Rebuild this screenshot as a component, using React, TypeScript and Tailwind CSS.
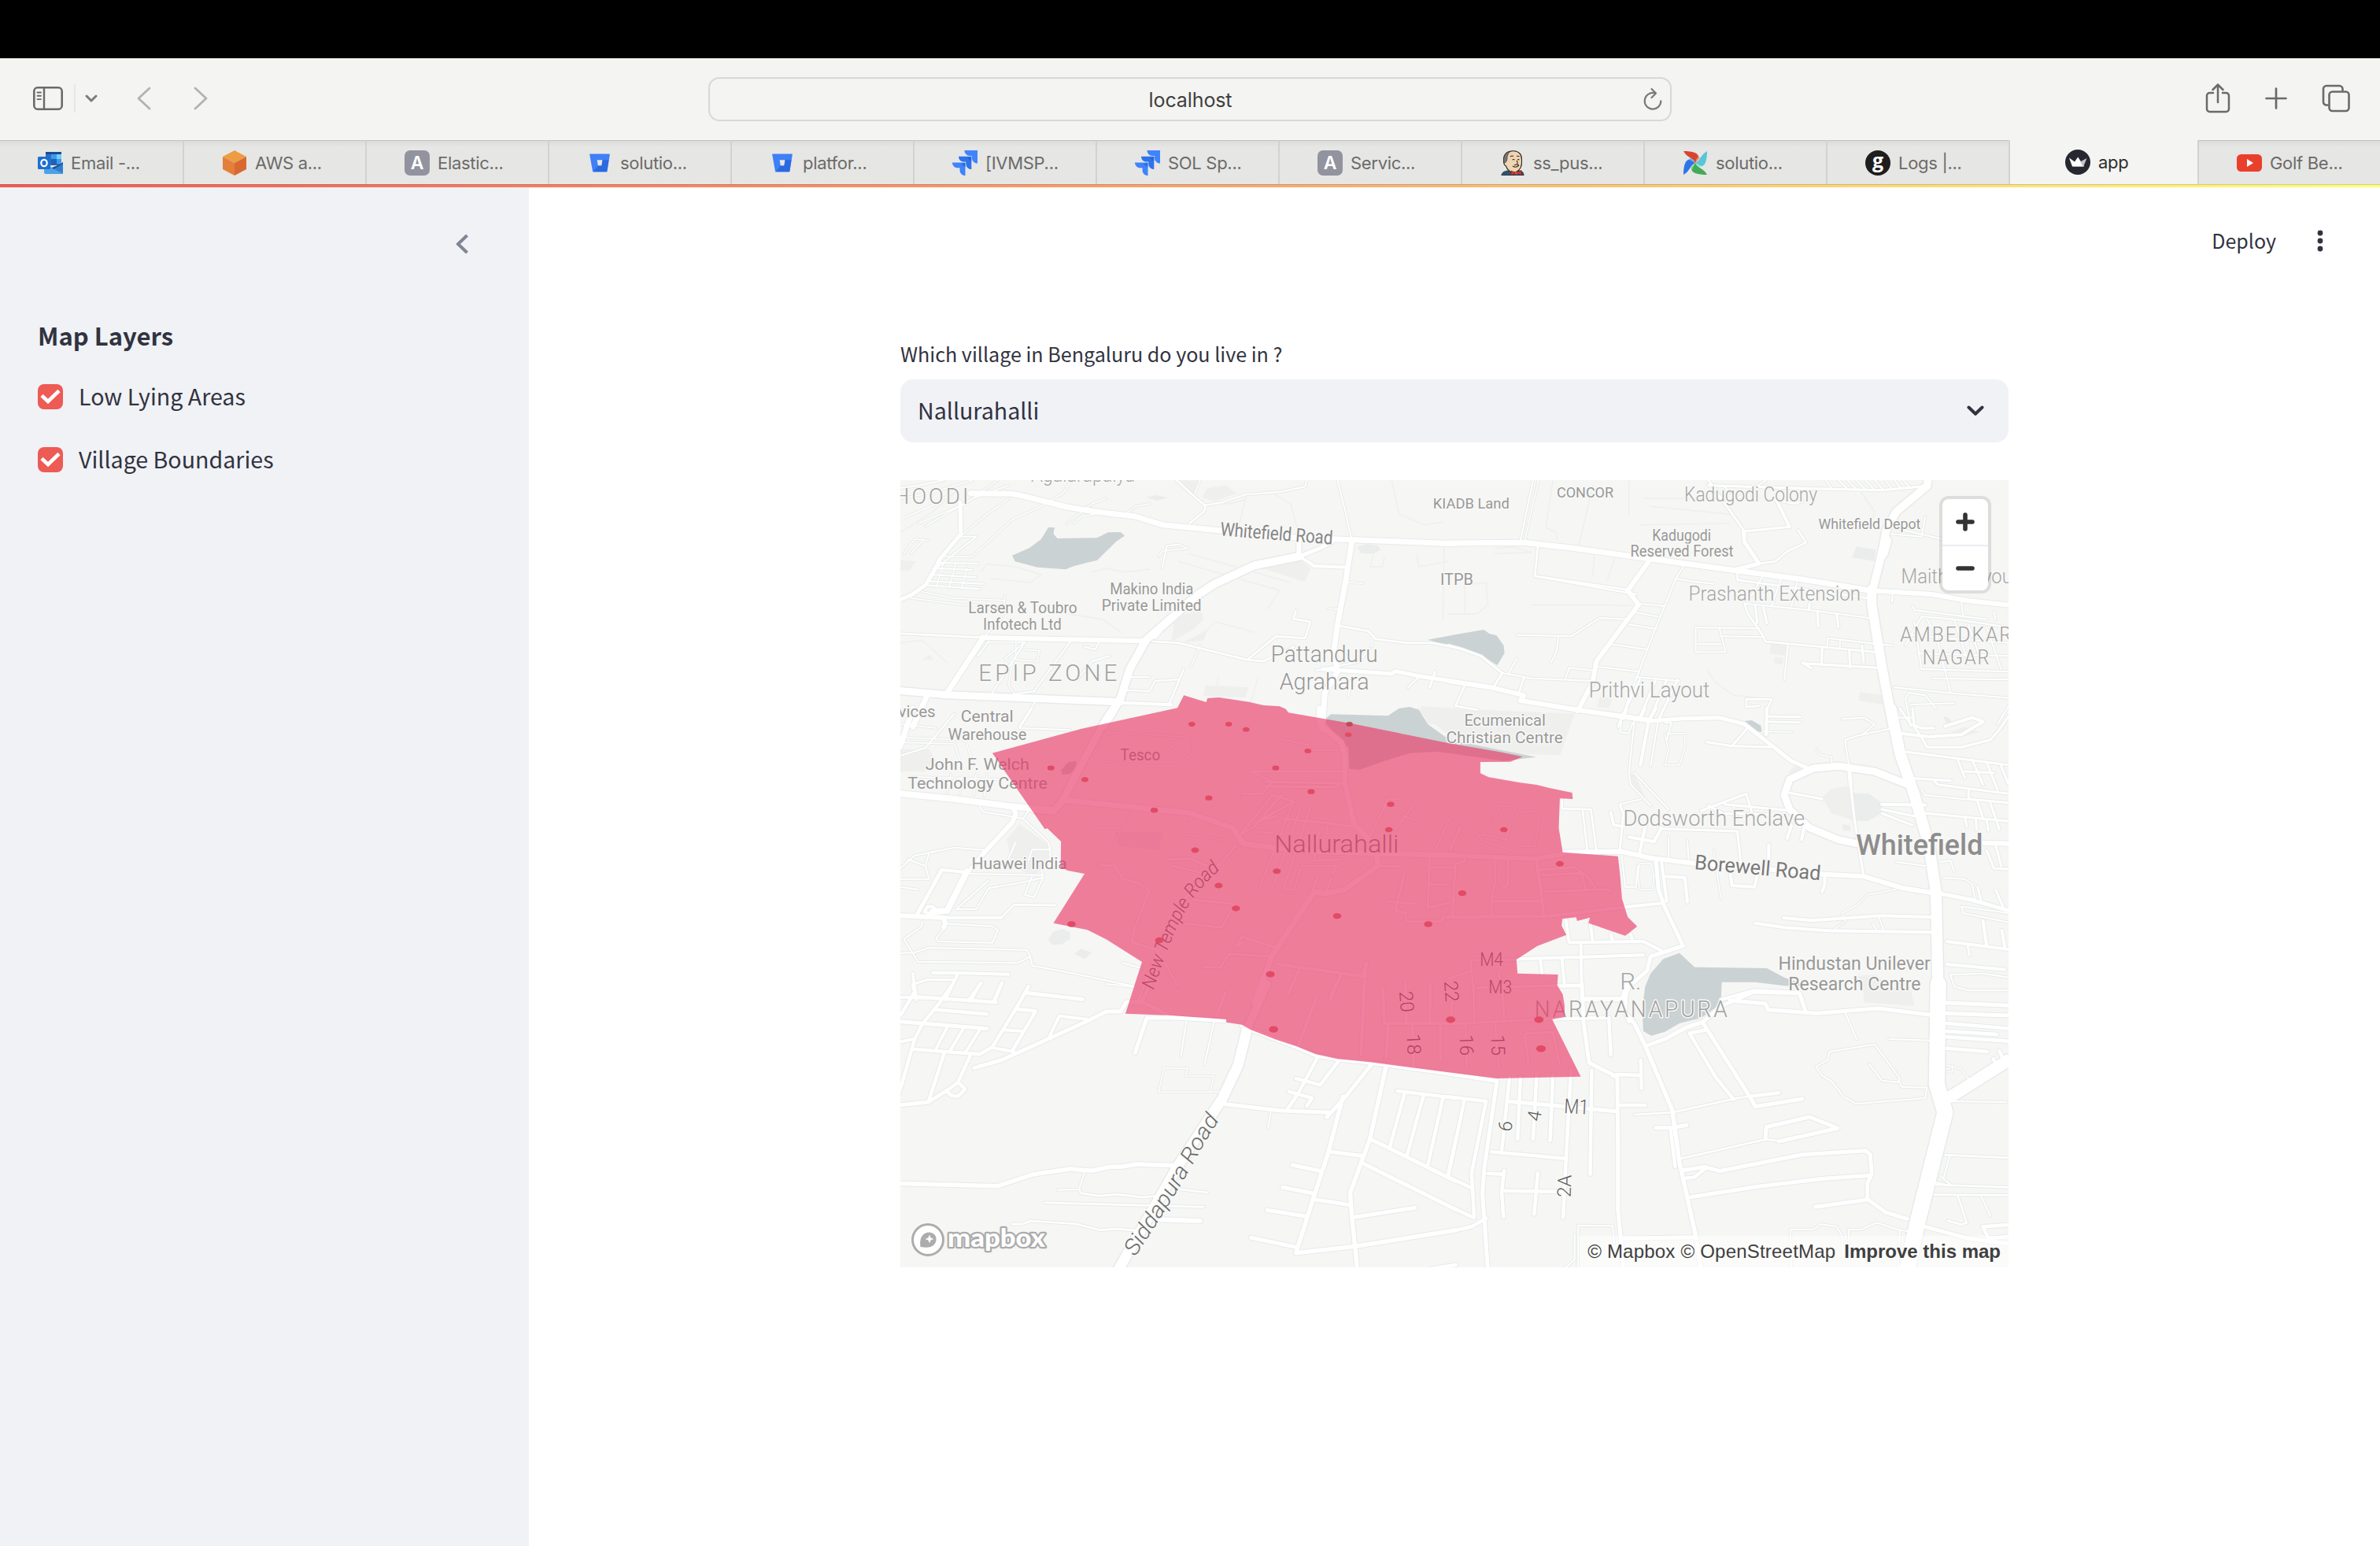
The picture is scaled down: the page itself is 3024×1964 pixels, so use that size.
import React from "react";

/* ------------------------------------------------------------------ */
/* ------------------------------------------------------------------ */

type SheetKey = "A" | "B" | "C" | "D" | "E" | "F";
const SX = 0.4592;
const SY = 1 / 3;
const ORIGIN: Record<SheetKey, [number, number]> = {
  A: [-14, -190],
  B: [696, -190],
  C: [-14, 290],
  D: [696, 290],
  E: [-14, 640],
  F: [696, 640],
};

const px = (s: SheetKey, x: number) => ORIGIN[s][0] + x * SX;
const py = (s: SheetKey, y: number) => ORIGIN[s][1] + y * SY;

function project(s: SheetKey, line: string) {
  return line
    .split(" ")
    .map((p) => {
      const [x, y] = p.split(",").map(Number);
      return `${px(s, x).toFixed(1)},${py(s, y).toFixed(1)}`;
    })
    .join(" ");
}

type Road = [number, string];

const ROADS: Record<SheetKey, Road[]> = {
  A: [
    [1.5, "30,640 110,620 230,570"],
    [1.5, "80,735 210,660 300,570"],
    [1.5, "100,745 230,640 330,590"],
    [1.5, "30,720 130,660 180,610"],
    [2, "30,600 80,590 150,570"],
    [1.5, "200,780 270,700 330,640"],
    [2, "200,785 240,785 130,905"],
    [1.5, "230,860 340,720 420,670 480,620 500,580"],
    [1.5, "150,860 230,860"],
    [1.5, "40,850 70,795 110,800"],
    [1.5, "60,850 95,795"],
    [2, "130,885 245,887"],
    [2, "120,905 230,912"],
    [2, "115,930 240,940"],
    [2, "105,955 260,965"],
    [2, "100,970 250,985"],
    [1.5, "150,885 130,975"],
    [1.5, "185,885 165,980"],
    [1.5, "215,905 200,985"],
    [1.5, "60,1020 200,1045 320,1050"],
    [1.5, "90,995 180,1020 320,1028"],
    [1.5, "320,1010 315,1080 265,1165"],
    [1.5, "490,735 560,660 600,640"],
    [1.5, "510,735 530,710 600,690"],
    [1.5, "650,705 680,670 720,660"],
    [2, "755,905 768,820 800,815"],
    [1.5, "745,860 755,840 825,830"],
    [1.5, "800,815 825,830"],
    [7, "225,620 340,622 375,632 490,672 570,690 680,708 755,740 900,760 1130,790 1240,795 1568,812"],
    [5, "196,655 198,775 140,870 128,905 100,970 60,1008 30,1025 10,1040"],
    [10, "1135,860 1010,895 900,965 850,1010 785,1090 710,1180 665,1290 640,1400 610,1470 590,1510"],
    [3, "785,1090 735,1172"],
    [6, "1133,790 1133,860"],
    [4, "1135,860 1175,897 1268,902"],
    [5, "1135,860 1190,830 1225,805"],
    [7, "1280,800 1262,960 1240,1120 1230,1220 1240,1300 1205,1380 1198,1520"],
    [2, "1240,570 1260,680 1280,800"],
    [2.5, "795,570 850,640 875,668 870,690 830,735"],
    [1.5, "860,570 845,625"],
    [2, "875,665 920,655 985,625 1080,615 1150,595 1155,570"],
    [1.2, "885,660 940,660 985,645"],
    [2.5, "10,1153 260,1170"],
    [6, "255,1170 710,1183"],
    [7, "260,1170 160,1380"],
    [9, "10,1370 160,1388 400,1402 640,1415"],
    [4, "640,1418 780,1426"],
    [7, "105,1390 65,1510"],
    [2.5, "730,1185 800,1190 990,1255 1035,1260 1120,1205"],
    [2.5, "990,1255 1070,1165 1150,1172 1165,1110 1118,1098 1125,1068"],
    [2.5, "1245,1125 1325,1145 1345,1175 1430,1190 1500,1190 1568,1208"],
    [1.5, "1335,1205 1340,1160"],
    [1.5, "1270,960 1310,963"],
    [1.5, "1215,1060 1240,1062"],
    [5, "1200,1290 1390,1308 1400,1298 1470,1318 1568,1338"],
    [2, "1180,1295 1300,1262 1330,1210"],
    [2, "1270,1395 1278,1330"],
    [3, "1495,1360 1510,1300"],
    [2, "1435,1360 1465,1320"],
    [2, "275,1185 245,1240"],
    [1.5, "270,1187 375,1187 320,1250 340,1265 330,1350 345,1385"],
    [1.5, "350,1190 350,1255 410,1260 415,1220 370,1215"],
    [2, "375,1187 285,1380"],
    [2, "500,1187 400,1375 345,1385"],
    [2, "580,1188 570,1215 540,1205"],
    [2, "665,1320 720,1320"],
    [2, "655,1370 720,1375 735,1335 800,1330"],
    [2.5, "815,1290 775,1420"],
    [1.5, "860,1200 835,1280"],
    [2, "520,1330 560,1260 610,1240"],
    [2, "410,1400 360,1510"],
    [1.2, "800,880 1080,990 1045,1060"],
    [1.2, "830,850 1110,960"],
    [1.2, "1010,1150 960,1130 900,1110 860,1170"],
    [1.2, "1050,610 1110,660 1130,760"],
    [1.2, "990,620 960,780"],
    [1.2, "1390,570 1410,700 1480,740 1530,730"],
    [1.2, "1340,850 1330,900 1365,900 1370,860"],
    [1.2, "1535,820 1532,1100"],
    [1.2, "1460,855 1465,900 1545,880"],
    [1.2, "30,770 120,690 190,610"],
    [1.2, "255,920 270,890 350,900 420,930 390,960 280,945"],
    [1.2, "560,920 600,905 650,920 720,910"],
    [1.2, "910,1320 900,1420"],
    [1.2, "1000,1420 1020,1320"],
    [1.2, "30,1190 90,1180 160,1265"],
    [1.2, "450,1070 590,1100 640,1150"],
  ],
  B: [
    [7, "0,810 210,808 340,828 560,870 800,915 990,950 1165,990"],
    [6, "1165,990 1340,1005 1440,1030 1568,1048"],
    [10, "1328,565 1325,592 1240,690 1212,760 1200,850 1175,985 1172,1040"],
    [13, "1212,800 1202,850"],
    [12, "1172,985 1172,1045 1200,1280 1232,1510"],
    [6, "560,870 497,990 527,1045 410,1260 400,1340 358,1450"],
    [2.5, "248,825 240,935 495,987"],
    [2.5, "240,935 520,1005"],
    [2, "630,945 575,1130 500,1400 485,1460"],
    [2, "650,900 630,945 670,955 735,965"],
    [2, "520,1075 580,1090"],
    [2, "500,1120 575,1137"],
    [2, "450,1195 550,1215"],
    [2, "527,1040 600,1050"],
    [3, "720,570 820,765 945,748 905,640"],
    [5, "818,765 820,805 860,888 790,912"],
    [4, "945,748 915,665"],
    [2.5, "860,888 905,880 940,840 990,808 968,760"],
    [2.5, "905,645 960,660 980,650"],
    [3, "720,590 960,600 1200,608 1325,592"],
    [2, "1045,570 1060,600"],
    [2, "1080,570 1105,603"],
    [2, "1105,570 1130,605"],
    [2, "1130,570 1155,607"],
    [2, "1155,570 1180,608"],
    [2, "1180,570 1205,608"],
    [2, "1210,570 1230,606"],
    [2, "1235,570 1255,604"],
    [2, "1260,570 1280,602"],
    [2, "760,590 800,640 880,570"],
    [2, "235,570 200,800"],
    [1.5, "250,570 212,800"],
    [1.2, "290,570 270,750 300,770 300,800"],
    [1.2, "400,590 360,830"],
    [1.2, "500,570 500,700"],
    [1.2, "560,670 780,700"],
    [1.2, "530,740 780,735"],
    [1.2, "540,640 720,640"],
    [1.2, "405,850 400,930"],
    [1.2, "460,870 440,950"],
    [1.2, "1130,590 1180,690 1170,730"],
    [2, "1320,710 1310,785 1225,775"],
    [2, "1228,750 1370,795"],
    [2.5, "800,925 800,950 1165,1020"],
    [2, "870,935 840,1010"],
    [2, "920,950 895,1050"],
    [2, "965,960 950,1050"],
    [2, "1230,1000 1228,1035"],
    [2.5, "820,1040 830,1080 870,1160 878,1185 1180,1225"],
    [2, "820,1040 1000,1065 1165,1095"],
    [3, "850,1050 855,1115"],
    [3, "872,1055 882,1115"],
    [3, "1022,1070 1024,1128"],
    [3, "1075,1078 1080,1130"],
    [3, "1000,1040 998,1065"],
    [2, "685,1132 860,1135"],
    [2, "685,1132 685,1225 768,1225 750,1132"],
    [2, "690,1195 755,1195"],
    [2, "755,1165 870,1168"],
    [2, "1048,1210 1050,1172 1180,1193"],
    [3, "1035,1205 1033,1275"],
    [3, "1110,1215 1112,1285"],
    [2, "1085,1180 1083,1215"],
    [3, "1145,1200 1150,1265"],
    [2, "1180,1193 1230,1200"],
    [3, "980,1265 1005,1287 985,1268 1185,1285"],
    [2, "940,1200 930,1330"],
    [3, "0,1200 40,1215 90,1240 150,1305 125,1360"],
    [2, "150,1305 230,1325 400,1335"],
    [2, "410,1280 530,1300"],
    [2, "190,1250 165,1310"],
    [2, "325,1325 335,1285 400,1295"],
    [6, "0,1335 120,1360 210,1390 200,1410 358,1445 560,1485"],
    [2.5, "210,1320 195,1385"],
    [2.5, "45,1355 20,1430 80,1445"],
    [3, "358,1445 400,1345"],
    [2, "190,1160 340,1165 420,1095 500,1100"],
    [2, "305,1170 300,1220 285,1265"],
    [1.2, "230,1045 510,1047"],
    [3, "530,1330 485,1460 470,1510"],
    [3, "575,1330 530,1475"],
    [3, "635,1330 585,1475"],
    [3, "605,1330 560,1475"],
    [2, "520,1320 640,1335"],
    [1.2, "715,1290 740,1340 790,1390 895,1405"],
    [2.5, "895,1405 825,1405 825,1435 860,1430"],
    [2.5, "895,1405 880,1450 882,1510"],
    [2.5, "885,1470 975,1472"],
    [2, "1235,1360 1420,1385 1551,1400"],
    [2, "1285,1050 1290,1065 1490,1100"],
    [2, "1420,1035 1425,1090"],
    [2, "1265,1200 1310,1090 1400,1100 1551,1130"],
    [2, "1290,1110 1310,1290"],
    [2, "1325,1100 1350,1160 1390,1380"],
    [2, "1400,1100 1440,1270"],
    [2, "1280,1160 1551,1190"],
    [2, "1300,1230 1551,1240"],
    [2, "1310,1290 1551,1300"],
    [2, "1340,1325 1551,1330"],
    [2, "1440,1120 1475,1260"],
    [2, "1490,1130 1530,1290"],
    [2, "1510,1070 1515,1100"],
    [2, "1275,1380 1265,1400 1280,1510"],
    [2, "1275,1380 1320,1390 1350,1440"],
    [2, "1280,1425 1400,1420"],
    [2, "1551,1430 1520,1500"],
    [2, "1240,1475 1285,1475"],
    [1.2, "130,830 180,825 230,845 130,850"],
    [1.2, "0,1080 80,1080 110,1045 105,960 45,970 45,1080"],
  ],
  C: [
    [8, "30,325 180,345 330,372 450,388"],
    [6, "340,375 350,400 340,435 255,560"],
    [9, "620,0 600,40 560,140 480,350 455,390 400,385"],
    [7, "65,0 30,145"],
    [2, "395,0 360,75 500,82"],
    [2, "30,180 100,150 180,20"],
    [1.5, "30,60 130,75"],
    [1.5, "30,110 210,120 230,200"],
    [1.5, "200,260 195,325"],
    [1.5, "170,250 160,320"],
    [1.5, "240,250 235,330"],
    [1.5, "270,250 262,335"],
    [1.5, "60,260 300,270"],
    [1.5, "30,130 180,135 200,220"],
    [2, "250,372 260,395 310,405 370,420 440,510 445,540"],
    [2, "370,420 385,390"],
    [7, "490,350 830,398 950,455 980,515 1060,530 1180,545 1568,560"],
    [7, "1190,0 1190,60 1250,130 1260,180 1260,280 1285,440 1320,490 1345,520 1352,600 1260,690 1210,705 1175,700 1060,940 1010,1120"],
    [3, "960,520 930,570 820,720 770,850 720,1000 690,1110"],
    [3, "580,598 625,598 645,650 690,665 720,695 680,830 670,890 740,920 800,1060"],
    [3, "770,575 830,572 880,600"],
    [2.5, "785,600 870,628"],
    [3, "820,820 920,835 955,745 840,730"],
    [3, "980,890 960,910 975,870 1065,910"],
    [3, "870,985 915,988 940,935 1055,945"],
    [4, "1075,975 1310,1020 1320,970"],
    [4, "1135,990 1105,1085"],
    [4, "1250,1010 1220,1110"],
    [4, "1320,970 1310,1110"],
    [3, "960,490 1010,450 1085,330"],
    [2.5, "1020,470 1060,475"],
    [3, "975,475 1060,330 1120,355 1020,430 1070,410"],
    [2.5, "975,325 1030,325 1060,280 1000,240 1250,240"],
    [3, "1040,280 1250,285 1235,300 1040,297"],
    [2.5, "1140,370 1060,685"],
    [2.5, "1165,375 1090,690"],
    [2.5, "1115,365 1025,680"],
    [3, "1090,420 1200,435 1280,450"],
    [2.5, "1190,470 1175,580 1250,575"],
    [2.5, "1215,430 1210,480"],
    [2.5, "1090,690 1120,690 1140,600 1240,600 1225,630"],
    [3, "1185,640 1170,700"],
    [3, "1222,645 1210,700"],
    [3, "1450,370 1400,460"],
    [2.5, "1410,345 1380,345 1330,490"],
    [2, "1420,410 1460,425"],
    [3, "1355,600 1410,602"],
    [3, "1425,630 1400,770 1430,780 1430,812 1530,812 1530,795 1568,795"],
    [3, "1375,735 1455,745"],
    [3, "1495,560 1490,760 1550,740"],
    [3, "1495,605 1568,607"],
    [3, "1495,670 1550,672"],
    [2.5, "1550,420 1510,540"],
    [2, "1160,185 1160,140 1080,115"],
    [2, "1165,158 1245,160"],
    [1.5, "1030,105 1050,0"],
    [1.5, "600,90 840,110 840,170 800,220 720,220 590,200 570,160 610,105"],
    [1.5, "770,155 820,115"],
    [1.5, "770,155 830,190"],
    [1.5, "670,390 625,510"],
    [1.5, "560,455 640,455"],
    [1.5, "1000,235 975,330"],
    [1.5, "825,430 810,480 925,500"],
    [6, "30,790 150,797"],
    [4, "150,797 310,797"],
    [2.5, "310,797 345,748 460,750"],
    [8, "215,620 160,770 120,775"],
    [4, "120,755 105,755 97,775 115,785 130,770 120,755"],
    [5, "145,615 75,790"],
    [4, "145,615 215,625"],
    [5, "280,520 220,620"],
    [2, "220,630 425,635"],
    [2, "100,600 110,550 180,530 265,540"],
    [2, "50,575 100,600 110,650 30,650"],
    [2, "30,610 70,560 130,545"],
    [2, "275,685 360,665 425,645"],
    [2, "275,655 185,765 240,765 275,685"],
    [2, "395,640 375,710 400,720 425,645 420,610 445,600 445,540"],
    [2, "350,510 330,570"],
    [2, "385,580 395,538 445,538"],
    [6, "150,800 155,820 150,835"],
    [2, "155,820 285,830 300,845 285,893 135,888 130,875 150,840"],
    [2, "90,810 90,830 40,880 80,965 355,970 390,945 380,920 110,912 70,930 30,933"],
    [2, "390,945 395,980 510,1010 680,1060"],
    [2, "645,970 700,990"],
    [4, "65,1010 75,1110"],
    [4, "120,1007 190,1008 330,1013"],
    [4, "190,1010 155,1110"],
    [3, "70,1050 105,1033 180,1035"],
    [4, "255,1045 220,1110"],
    [4, "312,1045 290,1110"],
    [4, "385,1060 365,1110"],
    [4, "380,1082 535,1110"],
    [4, "30,1100 130,1105"],
    [2, "30,680 80,690"],
    [3, "725,1050 700,1110"],
    [3, "930,1085 920,1110"],
    [3, "1365,1065 1368,1110"],
    [3, "1428,1035 1425,1110"],
    [3, "1497,1050 1495,1110"],
  ],
  D: [
    [5, "330,0 480,32 560,48 650,38 750,35 820,60 950,200 1000,230"],
    [3, "495,0 485,40"],
    [4, "575,0 555,45 532,215"],
    [3, "545,0 530,45"],
    [2, "515,50 500,245 505,290 560,370"],
    [2, "515,245 610,385"],
    [2, "580,55 560,220"],
    [2, "480,50 475,90 500,95 510,55"],
    [2, "600,55 618,55 605,120"],
    [1.5, "605,95 655,95 655,150 640,215 600,215 610,160 600,100"],
    [3, "715,128 785,143 890,147"],
    [3, "785,143 825,80"],
    [4, "882,0 880,100"],
    [2.5, "885,30 975,32"],
    [2.5, "885,50 975,53"],
    [1.5, "870,88 950,90"],
    [9, "1130,515 1080,500 1000,455 945,385 930,330 945,270 1010,228 1080,220 1180,240 1275,292"],
    [3, "945,322 1035,345"],
    [5, "1110,232 1114,295"],
    [3, "1114,295 1125,430 1140,560 1150,640"],
    [2, "1110,230 1098,120 1130,105 1220,78"],
    [1.5, "1020,155 1025,175 1060,185 1062,210"],
    [2, "1090,40 1150,35 1180,60 1150,95"],
    [14, "1225,0 1250,170 1290,330 1330,520 1350,700 1356,1110"],
    [4, "1200,365 1320,368"],
    [3, "1200,385 1290,410"],
    [3, "1200,400 1285,445"],
    [3, "1250,0 1280,60 1310,75 1345,75"],
    [4, "1255,95 1330,108 1420,100 1480,50 1450,35 1375,68"],
    [3, "1310,110 1325,148 1420,148 1500,120 1525,80 1551,30"],
    [3, "1285,0 1290,70 1310,110"],
    [3, "1265,165 1551,215"],
    [3, "1270,265 1390,275"],
    [3, "1345,275 1355,290 1551,325"],
    [3, "1408,190 1430,265"],
    [3, "1450,195 1480,290"],
    [3, "1490,205 1520,310"],
    [3, "1430,240 1510,245"],
    [3, "1530,220 1551,290"],
    [2, "1310,310 1320,330 1460,350"],
    [3, "1440,310 1440,345 1551,360"],
    [3, "1310,398 1551,430"],
    [3, "1430,415 1435,450"],
    [3, "1460,420 1462,462"],
    [3, "1490,425 1495,465"],
    [3, "1465,355 1480,420"],
    [3, "1500,360 1525,460"],
    [6, "1480,512 1551,515"],
    [3, "1490,540 1510,610 1551,612"],
    [3, "1515,520 1530,600"],
    [2, "1360,585 1390,580 1400,620"],
    [2, "1240,585 1320,600"],
    [2, "1370,645 1430,650 1450,670 1460,740"],
    [3, "1465,680 1475,735"],
    [3, "1515,690 1535,755"],
    [5, "1360,705 1450,730 1551,770"],
    [2, "1420,755 1425,780 1551,815"],
    [2, "1420,755 1551,780"],
    [6, "317,548 480,545 560,570 680,590 860,610 1040,632 1150,640 1260,685 1340,703"],
    [2.5, "315,345 315,382 395,385 410,540"],
    [2.5, "372,388 385,540"],
    [3, "475,368 485,400 475,540"],
    [3.5, "450,395 458,445 485,450"],
    [2, "475,365 535,345"],
    [4, "545,450 530,550"],
    [4, "500,490 570,508 590,455"],
    [3, "590,458 800,468 810,590"],
    [3, "700,390 825,325 840,395"],
    [3, "765,365 935,388"],
    [3, "720,370 760,400 900,405"],
    [2, "790,370 795,400"],
    [4, "950,445 938,495"],
    [4, "985,450 978,500"],
    [2, "610,490 610,570"],
    [2, "662,505 665,575"],
    [4, "887,520 887,605"],
    [4, "780,620 785,675 848,680 855,635"],
    [4, "1042,640 1042,670 1035,698"],
    [1.5, "735,540 755,725"],
    [5, "575,575 582,690 600,760 650,905 560,945 550,1000 500,1060 485,1110"],
    [4, "590,580 605,735"],
    [4, "600,640 655,645 662,738"],
    [4, "490,757 595,742"],
    [2, "480,560 490,680 520,680 525,600"],
    [1.5, "530,590 560,590 570,640 565,690 530,690 525,640 530,590"],
    [4, "928,798 1005,808 1200,790 1335,795"],
    [4, "850,818 930,835 1050,847 1335,853"],
    [2, "1175,820 1185,845"],
    [2, "1192,798 1205,845"],
    [1.5, "1240,690 1160,710 1130,750 1090,780 1100,810 1070,840"],
    [4, "1380,888 1551,918"],
    [4, "1480,810 1490,905"],
    [4, "1532,845 1540,910"],
    [3, "1438,905 1442,940"],
    [4, "1380,975 1540,995"],
    [2, "1390,1015 1400,1060 1440,1075 1551,1075"],
    [2, "1390,1015 1480,1010 1551,1025"],
    [4, "325,800 335,892 540,888 600,930"],
    [4, "392,800 400,888"],
    [4, "450,860 455,888"],
    [4, "505,860 510,885"],
    [4, "190,955 540,940"],
    [4, "367,892 370,1110"],
    [4, "255,958 260,1012"],
    [4, "315,955 322,1055 365,1055"],
    [4, "300,1058 370,1057"],
    [4, "372,1105 485,1105"],
    [4, "755,1110 845,1075 970,1082 980,1110"],
    [6, "0,560 240,573 317,555"],
    [4, "0,795 270,793 490,757"],
    [3, "20,590 12,790"],
    [3, "20,590 45,585 45,575"],
    [3, "165,580 165,675 148,685"],
    [3, "128,580 130,660 120,735 120,790"],
    [3, "120,735 260,735"],
    [4, "245,580 265,790"],
    [3, "255,615 350,605 385,640 410,690"],
    [3, "260,635 370,628 380,690"],
    [3, "265,698 430,690 445,690 450,700"],
    [3, "35,450 5,540"],
    [2, "140,370 185,375 160,500 120,485 85,480 90,500 195,550"],
    [2, "205,395 255,390 240,525 195,525"],
    [2, "125,430 145,370"],
    [3, "60,960 190,957"],
    [3, "62,960 72,1110"],
    [3, "0,1030 65,1000"],
    [3, "80,1065 300,1057"],
    [3, "140,1000 150,1110"],
  ],
  E: [
    [5, "0,140 270,170"],
    [4.5, "65,0 70,30 35,110 10,150"],
    [4.5, "65,48 295,70"],
    [4.5, "175,0 140,70 90,155 70,210 35,380 20,440"],
    [4.5, "250,0 225,65"],
    [4.5, "310,0 290,68"],
    [4.5, "385,10 350,95 285,240 250,268 65,248"],
    [4.5, "380,35 535,58"],
    [4.5, "130,98 270,115"],
    [4.5, "350,95 405,103 340,255"],
    [4, "315,175 370,180"],
    [4, "160,165 130,245"],
    [4, "205,170 170,250"],
    [4, "250,175 210,262"],
    [4, "0,230 65,210"],
    [5, "235,320 310,290 550,140 600,105 640,105 655,70 700,68 770,118"],
    [4, "285,243 345,258"],
    [4, "440,210 470,122 550,135"],
    [4.5, "152,262 108,450"],
    [4.5, "225,268 190,375 210,400 190,428 172,425 158,408 190,375"],
    [5, "20,463 108,450 160,405"],
    [5, "680,262 712,130 780,128 932,140"],
    [2, "822,140 807,275"],
    [2, "898,145 872,308"],
    [1.5, "760,320 825,322 820,350 898,352 888,410"],
    [1.5, "760,320 745,412 912,412"],
    [13, "990,170 965,310 920,440 800,690 700,930 625,1110"],
    [10, "1045,0 990,170"],
    [5, "975,160 1070,212 1125,240 1180,272 1240,287 1330,300 1568,345"],
    [5, "930,458 1080,482 1215,490"],
    [5, "1335,305 1265,425 1210,508"],
    [4.5, "1185,280 1130,420 1100,480"],
    [4.5, "1245,290 1192,385 1125,360"],
    [4.5, "1105,410 1170,435 1155,465"],
    [2, "1055,488 1048,550"],
    [5.5, "1255,430 1215,640 1170,830 1125,1025 1290,1000 1568,938"],
    [5.5, "1375,310 1330,590 1275,795 1280,890 1295,1090"],
    [5, "1215,638 1305,655"],
    [5, "1330,590 1568,752"],
    [5, "1305,680 1568,860"],
    [4.5, "1405,408 1568,435"],
    [4.5, "1425,420 1385,620"],
    [4.5, "1478,425 1432,655"],
    [4.5, "1532,432 1490,690"],
    [4.5, "1568,590 1545,730"],
    [5, "1115,690 1190,712"],
    [5, "1088,775 1170,797"],
    [5, "1170,820 1275,842"],
    [5, "1045,862 1150,885"],
    [5, "1000,967 1125,1003"],
    [5, "1280,890 1455,853"],
    [4.5, "1500,1085 1568,1070"],
    [5.5, "20,760 300,770 400,725 500,705 560,712 610,697 640,697 685,687 800,692"],
    [2, "540,715 525,783 465,785"],
    [2.5, "525,783 530,797 580,808 630,802 700,813 740,808"],
    [2.5, "430,833 870,850"],
    [2.5, "800,782 880,795"],
    [6, "750,898 860,903"],
    [2.5, "340,915 370,915 390,903 515,914 585,938 625,933 690,940"],
    [2, "600,0 680,12"],
    [4, "1115,0 1105,35"],
    [4, "1235,0 1222,45"],
    [4, "1182,50 1130,240"],
    [4, "930,35 905,120"],
    [4, "720,0 700,68"],
    [4, "1315,0 1305,270"],
    [4, "1365,15 1370,150 1568,150"],
    [4, "1380,155 1375,280"],
    [4, "1428,0 1430,150"],
    [4, "1497,0 1495,150"],
    [4, "1448,155 1450,310"],
    [4, "1525,150 1525,295"],
  ],
  F: [
    [5, "0,342 135,370 100,700 95,800 110,1090"],
    [4.5, "0,430 105,447 65,720 72,890"],
    [4.5, "45,440 0,735"],
    [4.5, "0,735 60,775"],
    [4.5, "0,845 70,890"],
    [4.5, "0,945 65,925 105,893"],
    [4.5, "170,355 148,635"],
    [4.5, "200,355 192,592"],
    [4.5, "245,340 235,592"],
    [4.5, "290,345 282,597"],
    [4.5, "340,325 325,700 318,890"],
    [5, "165,447 465,485"],
    [4.5, "120,640 325,665"],
    [4.5, "397,330 393,725"],
    [4.5, "110,722 155,725"],
    [4.5, "155,710 148,790 153,888"],
    [4.5, "150,788 315,792"],
    [4.5, "248,720 238,877"],
    [5, "370,0 375,150 390,300 468,355 470,600 470,860 480,1000 485,1090"],
    [4.5, "290,133 445,128 450,270"],
    [4.5, "455,350 470,345 530,348"],
    [4.5, "533,290 535,398"],
    [4.5, "472,462 545,462"],
    [5, "485,970 685,965"],
    [5.5, "490,110 515,150 545,235 620,480 640,680 685,960 700,1090"],
    [4.5, "370,60 480,60 495,0"],
    [4, "495,0 490,110 500,145"],
    [5, "545,237 600,210 660,165 705,145 755,85 845,30 972,35 990,108"],
    [5, "780,63 878,75 885,98 1020,112 1190,93 1335,118"],
    [5, "705,148 835,430 850,467 980,438"],
    [4.5, "668,188 715,175"],
    [4.5, "668,188 740,355 790,440"],
    [4.5, "835,428 915,415"],
    [2.5, "515,498 620,490 800,435 850,425"],
    [5, "575,548 620,548 660,538"],
    [4.5, "615,550 628,695"],
    [5, "878,592 880,545 1000,507 1078,550 915,600"],
    [2.5, "645,665 880,592 910,597"],
    [5, "650,710 710,697 750,713 980,650 1155,635 1168,650 1172,725 1160,760 1160,820 1210,870 1270,895"],
    [4.5, "655,740 680,737 715,700"],
    [5, "672,812 850,773 1040,742 1165,730"],
    [5, "1015,850 1160,822"],
    [2, "1098,108 1130,210"],
    [2, "1220,210 1335,215"],
    [2, "1055,258 1180,230 1250,360 1245,375 1200,368 1165,305"],
    [2, "1055,258 1050,290 1018,315 1035,350 1060,370 1095,430 1130,457 1320,435 1325,395 1255,392 1248,370"],
    [20, "1356,0 1352,380 1375,490 1300,900 1270,1090"],
    [15, "1390,430 1551,290"],
    [4.5, "1525,255 1540,300"],
    [4, "1508,285 1520,315"],
    [5, "1380,72 1551,82"],
    [5, "1380,112 1551,120"],
    [4.5, "1380,150 1551,170"],
    [4.5, "1380,180 1518,192"],
    [4.5, "1380,202 1551,218"],
    [4.5, "1380,245 1492,258"],
    [1.5, "1380,310 1420,325 1445,370"],
    [1.5, "1380,335 1395,335 1395,310"],
    [2, "1395,447 1545,450"],
    [2.5, "1375,652 1551,662"],
    [2, "1388,655 1370,745"],
    [2, "1360,730 1395,770 1345,755"],
    [2.5, "1350,765 1551,775"],
    [2.5, "1345,803 1551,805"],
    [2.5, "1410,808 1435,910 1420,917 1382,902"],
    [2, "1475,808 1500,885"],
    [5, "1320,925 1440,970 1551,990"],
    [4.5, "1480,925 1551,918"],
    [4.5, "1480,925 1500,985"],
    [4.5, "1495,970 1551,962"],
    [2, "360,1090 360,920 455,922 460,990"],
    [2, "350,955 350,1050 325,1080"],
    [2, "950,1090 947,935 1010,935 1030,915 1075,925 1090,960 1095,1090"],
    [2, "1110,1090 1108,937 1145,935 1185,910 1250,938 1270,942"],
    [2, "1250,938 1245,1090"],
    [3, "70,0 72,148"],
    [3, "150,0 155,140"],
    [3, "80,15 300,5 365,8"],
    [3, "0,153 290,133"],
    [3, "10,70 8,150"],
    [3, "48,150 52,320"],
    [3, "130,145 140,325"],
    [3, "222,300 212,190 290,183"],
    [3, "290,183 308,305"],
  ],
};

const LAND: [SheetKey, string][] = [
  ["A", "795,570 860,570 840,625"],
  ["A", "1030,905 1135,870 1165,905 1150,958"],
  ["A", "30,875 75,880 55,915 30,915"],
  ["A", "790,1095 860,1060 870,1100 840,1140 780,1185"],
  ["A", "810,1190 880,1140 870,1180"],
  ["A", "875,1352 995,1360 985,1398 868,1392"],
  ["A", "880,600 930,590 960,620 900,650 865,635"],
  ["A", "1470,1430 1568,1440 1568,1500 1490,1500"],
  ["A", "90,1255 112,1235 122,1255"],
  ["C", "30,155 110,155 130,200 100,240 30,240"],
  ["C", "360,440 440,520 440,580 400,640 340,600 325,500"],
  ["C", "1450,0 1568,0 1568,120 1500,50"],
  ["D", "0,0 350,20 310,178 170,172 0,130"],
  ["B", "893,1190 940,1200 935,1240 890,1230"],
  ["B", "903,1245 927,1248 925,1272 903,1268"],
  ["B", "420,1395 455,1400 445,1440 412,1435"],
  ["B", "1140,1378 1205,1390 1203,1425 1135,1410"],
  ["D", "505,245 520,260 545,340 520,320 500,290"],
  ["D", "940,245 960,218 990,228 965,252"],
  ["D", "1035,340 1060,305 1110,295 1125,428 1060,400"],
  ["D", "1390,90 1430,70 1470,90 1430,105"],
  ["D", "1120,1020 1180,1015 1280,1110 1160,1110"],
  ["F", "1150,20 1280,20 1290,85 1150,70"],
];

const PARKS: [SheetKey, string][] = [
  ["B", "1130,823 1183,835 1180,878 1118,865"],
  ["D", "1115,322 1165,325 1200,360 1200,400 1160,430 1125,428"],
  ["D", "1370,30 1385,35 1395,55 1378,55"],
  ["A", "1295,825 1320,812 1350,818 1360,835 1340,850 1305,848"],
  ["A", "710,635 740,627 770,637 740,648"],
  ["C", "530,915 560,930 540,955 513,935"],
  ["C", "440,880 455,850 480,840 500,855 500,880 475,900 450,900"],
  ["C", "625,470 755,472 745,540 635,525"],
  ["D", "1092,440 1112,448 1112,468 1092,462"],
];

const WATER: [SheetKey, string][] = [
  ["A", "440,750 457,750 454,775 465,792 575,790 605,769 640,768 651,782 628,803 575,875 545,885 510,898 488,910 410,902 348,880 340,857 388,828 420,795"],
  ["A", "1490,1178 1568,1158 1645,1140 1660,1155 1680,1162 1700,1200 1702,1230 1682,1275 1640,1240 1568,1210"],
  ["A", "1222,1462 1380,1468 1410,1440 1440,1434 1465,1445 1490,1500 1550,1560 1790,1625 1700,1640 1520,1605 1440,1610 1370,1640 1300,1674 1273,1670 1270,1590 1200,1485"],
  ["D", "820,48 840,45 865,65 868,90 850,85"],
  ["D", "640,932 595,955 560,1010 545,1060 537,1150 540,1230 562,1247 600,1232 640,1200 700,1180 740,1140 755,1110 757,1043 850,1043 930,1057 1000,1060 930,1025 882,990 682,986"],
  ["C", "475,235 495,205 515,200 520,220 500,250 478,252"],
];

const BOUNDARY = [
  project("C", "285,170 530,78 790,0"),
  project("A", "797,1438 815,1390 877,1416 880,1401 912,1398 995,1415 1035,1428 1080,1432 1097,1442 1104,1456 1280,1498"),
  project("D", "0,132 140,165 206,184 172,203 89,204 89,247 112,262 200,283 245,291 280,303 343,321 345,345 309,343 306,455 317,548 470,563 476,640 481,725 497,795 523,831 490,866 388,818 392,797 357,810 354,796 316,802 314,828 327,863 247,905 189,957 192,1010 304,1014 302,1055 317,1090"),
  project("F", "322,80 322,126 288,135 367,353 135,360 0,337"),
  project("E", "1330,298 1240,286 1180,268 1125,237 1070,212 1000,175 975,155 932,146 932,135 780,120 653,113"),
  project("C", "699,966 600,880 548,844 454,818 540,630 492,617 486,612 474,612 475,507 437,457 430,460"),
].join(" ");

const DOTS: [SheetKey, number, number][] = [
  ["C", 837, 60], ["C", 939, 60], ["C", 987, 80], ["C", 1273, 60], ["C", 1270, 100],
  ["C", 1158, 162], ["C", 447, 227], ["C", 1069, 227], ["C", 541, 271], ["C", 1167, 317],
  ["C", 884, 341], ["C", 1387, 365], ["C", 733, 388], ["C", 1382, 462], ["C", 846, 540],
  ["C", 1072, 620], ["C", 911, 675], ["C", 959, 762], ["C", 1239, 791], ["C", 1491, 822],
  ["C", 504, 822], ["C", 747, 884], ["C", 1054, 1013], ["E", 1063, 173], ["E", 1553, 136],
  ["D", 154, 462], ["D", 309, 592], ["D", 39, 704], ["F", 251, 136], ["F", 257, 247],
];

/* sheet, left, right, baseline, text, size, colour, weight, angle */
type Label = [SheetKey, number, number, number, string, number, string, number?, number?];
const SOFT = "#a6a6a6";
const MID = "#989898";
const LABELS: Label[] = [
  ["A", 395, 680, 575, "Agalarapalya", 25, SOFT, 300],
  ["A", 917, 1226, 781, "Whitefield Road", 24, "#858585", 400, 4.5],
  ["A", 613, 842, 1005, "Makino India", 19.5, MID],
  ["A", 590, 864, 1069, "Private Limited", 19.5, MID],
  ["A", 221, 520, 1077, "Larsen & Toubro", 19.5, MID],
  ["A", 262, 477, 1139, "Infotech Ltd", 19.5, MID],
  ["A", 1058, 1352, 1264, "Pattanduru", 29, "#969696", 300],
  ["A", 1082, 1328, 1368, "Agrahara", 29, "#969696", 300],
  ["A", -38, 128, 1472, "Services", 19.5, MID],
  ["A", 200, 344, 1492, "Central", 20, MID],
  ["A", 1507, 1716, 678, "KIADB Land", 18.5, MID],
  ["A", 1527, 1616, 968, "ITPB", 19.5, MID],
  ["B", 303, 458, 636, "CONCOR", 18.5, MID],
  ["B", 656, 1022, 650, "Kadugodi Colony", 25, SOFT, 300],
  ["B", 1027, 1308, 757, "Whitefield Depot", 18.5, MID],
  ["B", 567, 728, 802, "Kadugodi", 19.5, MID],
  ["B", 507, 790, 862, "Reserved Forest", 19.5, MID],
  ["B", 668, 1142, 1028, "Prashanth Extension", 26, SOFT, 300],
  ["B", 1256, 1578, 963, "Maithri Layout", 26, SOFT, 300],
  ["B", 392, 724, 1397, "Prithvi Layout", 28, SOFT, 300],
  ["D", 47, 270, 66, "Ecumenical", 20, MID],
  ["D", -3, 318, 132, "Christian Centre", 20, MID],
  ["C", 165, 380, 120, "Warehouse", 20.5, MID],
  ["C", 102, 388, 233, "John F. Welch", 21, MID],
  ["C", 53, 438, 306, "Technology Centre", 21, MID],
  ["C", 642, 750, 198, "Tesco", 20.5, "#8c8c8c"],
  ["C", 230, 492, 611, "Huawei India", 21, MID],
  ["C", 1068, 1410, 549, "Nallurahalli", 31, "#808080", 300],
  ["D", 90, 153, 982, "M4", 24, "#626262", 300],
  ["D", 114, 177, 1087, "M3", 24, "#626262", 300],
  ["D", 487, 987, 446, "Dodsworth Enclave", 28, SOFT, 300],
  ["D", 1131, 1480, 557, "Whitefield", 37, "#8d8d8d", 500],
  ["D", 683, 1030, 612, "Borewell Road", 26, "#787878", 400, 5.1],
  ["D", 478, 535, 1070, "R.", 29, SOFT, 300],
  ["D", 916, 1335, 997, "Hindustan Unilever", 23, MID],
  ["D", 944, 1308, 1073, "Research Centre", 23, MID],
  ["F", 323, 388, 492, "M1", 26, "#626262", 300, 3],
];

/* letter-spaced neighbourhood names: sheet, left, right, baseline, text, size, tracking */
const SPACED: [SheetKey, number, number, number, string, number, number][] = [
  ["A", 16, 226, 660, "HOODI", 27, 3],
  ["A", 250, 640, 1335, "EPIP ZONE", 29, 4],
  ["B", 1254, 1564, 1185, "AMBEDKAR", 25, 2],
  ["B", 1316, 1502, 1272, "NAGAR", 25, 2],
  ["F", 242, 780, 126, "NARAYANAPURA", 29, 3],
];

/* street numbers: x, y, text, angle */
const STREET_NUMBERS: [number, number, string, number][] = [
  [692, 650, "22", 86],
  [635, 663, "20", 86],
  [644, 717, "18", 87],
  [711, 718, "16", 88],
  [751, 718, "15", 88],
  [814, 809, "4", -80],
  [777, 822, "6", -80],
  [852, 897, "2A", -88],
];

const SHEETS = Object.keys(ROADS) as SheetKey[];

function RoadLayer({ casing }: { casing?: boolean }) {
  return (
    <g fill="none" strokeLinejoin="round" strokeLinecap="round" stroke={casing ? "#e7ebea" : "#ffffff"}>
      {SHEETS.map((s) =>
        ROADS[s].map(([w, line], i) => {
          if (w < 1.3) {
            return casing ? (
              <polyline key={s + i} points={project(s, line)} strokeWidth={1.4} stroke="#edf0ee" />
            ) : null;
          }
          return (
            <polyline
              key={s + i}
              points={project(s, line)}
              strokeWidth={casing ? w + (w > 8 ? 3 : 2) : w}
            />
          );
        })
      )}
    </g>
  );
}

function VillageMap() {
  return (
    <svg viewBox="0 0 1408 1000" className="block h-[1000px] w-[1408px]" fontFamily="Roboto, sans-serif">
      <rect width="1408" height="1000" fill="#f6f6f4" />
      {LAND.map(([s, p], i) => (
        <polygon key={i} points={project(s, p)} fill="#efefee" />
      ))}
      {PARKS.map(([s, p], i) => (
        <polygon key={i} points={project(s, p)} fill="#eaedec" />
      ))}
      {WATER.map(([s, p], i) => (
        <polygon key={i} points={project(s, p)} fill="#cad2d3" />
      ))}
      <RoadLayer casing />
      <RoadLayer />

      <g stroke="#f8f8f7" strokeWidth="3" strokeLinejoin="round" paintOrder="stroke">
        {LABELS.map(([s, l, r, b, text, size, color, weight = 400, angle = 0], i) => (
          <text
            key={i}
            fontSize={size}
            fontWeight={weight}
            fill={color}
            textLength={((r - l) * SX + 1) / Math.cos((angle * Math.PI) / 180)}
            lengthAdjust="spacingAndGlyphs"
            transform={`translate(${px(s, l) - 1.2} ${py(s, b)}) rotate(${angle})`}
          >
            {text}
          </text>
        ))}
        {SPACED.map(([s, l, r, b, text, size, tracking], i) => (
          <text
            key={i}
            x={px(s, l) - 1.5}
            y={py(s, b)}
            fontSize={size}
            fontWeight={300}
            fill="#a0a0a0"
            letterSpacing={tracking}
            textLength={(r - l) * SX + 1}
            lengthAdjust="spacingAndGlyphs"
          >
            {text}
          </text>
        ))}
        {STREET_NUMBERS.map(([x, y, text, angle]) => (
          <text
            key={text}
            textAnchor="middle"
            fontSize={24}
            fontWeight={300}
            fill={y > 760 ? "#5c5c5c" : "#525252"}
            transform={`translate(${x} ${y}) rotate(${angle})`}
          >
            {text}
          </text>
        ))}
        <path id="siddapura" d="M298 987 Q 345 917, 375 863 T 412 806" fill="none" stroke="none" />
        <path id="temple" d="M322 648 C 334 610, 345 580, 358 555 S 385 512, 414 488" fill="none" stroke="none" />
        <text fontSize={28} fill="#6b6b6b" fontStyle="italic" fontWeight={300}>
          <textPath href="#siddapura" textLength={205} lengthAdjust="spacingAndGlyphs">Siddapura Road</textPath>
        </text>
        <text fontSize={24} fill="#626262" fontStyle="italic" fontWeight={300}>
          <textPath href="#temple" textLength={178} lengthAdjust="spacingAndGlyphs">New Temple Road</textPath>
        </text>
      </g>

      <polygon points={BOUNDARY} fill="#e93967" fillOpacity="0.64" />
      {DOTS.map(([s, x, y], i) => {
        const cy = py(s, y);
        const r = 3.8 + ((cy - 300) / 430) * 1.9;
        return (
          <ellipse
            key={i}
            cx={px(s, x)}
            cy={cy}
            rx={r + 0.4}
            ry={r * 0.75}
            fill={i === 3 ? "#c04a58" : "#e14b65"}
          />
        );
      })}
    </svg>
  );
}

/* ------------------------------------------------------------------ */
/* Favicons                                                            */
/* ------------------------------------------------------------------ */

const icon = "block h-8 w-8 shrink-0";

const Outlook = () => (
  <svg viewBox="0 0 32 32" className={icon}>
    <rect x="10" y="2" width="20" height="17" fill="#2a6fc4" />
    <rect x="10" y="2" width="20" height="3" fill="#1b4a96" />
    <rect x="17" y="5" width="7" height="6" fill="#3f9be6" />
    <rect x="24" y="5" width="6" height="6" fill="#6fd0fb" />
    <rect x="17" y="11" width="7" height="8" fill="#1f63b8" />
    <rect x="24" y="11" width="6" height="6" fill="#3f9be6" />
    <path d="M8 16 L32 30 H10 a2 2 0 0 1 -2 -2z" fill="#4ba3e6" />
    <path d="M32 15 V30 L19 23z" fill="#2f7fd0" />
    <path d="M30 17 L32 15 V17 L20 24 L18 22z" fill="#1a4b93" />
    <rect x="0" y="8" width="16" height="16" rx="1.5" fill="#1f6fd0" />
    <ellipse cx="8" cy="16" rx="3.7" ry="4.2" fill="none" stroke="#fff" strokeWidth="2.2" />
  </svg>
);

const AwsCube = () => (
  <svg viewBox="0 0 32 32" className={icon}>
    <path d="M16 0 L31 8 L16 16 L1 8z" fill="#ee9c41" />
    <path d="M1 8 L16 16 V32 L1 24z" fill="#e2803a" />
    <path d="M31 8 L16 16 V32 L31 24z" fill="#d96833" />
  </svg>
);

const LetterA = () => (
  <span className="flex h-8 w-8 shrink-0 items-center justify-center rounded-[7px] bg-[#92939f] text-[23px] font-semibold leading-8 text-white">
    A
  </span>
);

const Bitbucket = () => (
  <svg viewBox="0 0 32 32" className={icon}>
    <path d="M4 4.5 H28 a.8 .8 0 0 1 .8 1 L25.4 26.6 a1 1 0 0 1 -1 .9 H8 a1 1 0 0 1 -1 -.9 L3.2 5.5 a.8 .8 0 0 1 .8 -1z M12.6 12.2 L13.8 19.4 H18.4 L19.5 12.2z" fill="#3f7ff7" fillRule="evenodd" />
    <path d="M27.6 12.2 H19.5 L18.4 19.4 H13.8 L8 26.8 a1 1 0 0 0 .6 .3 H24.4 a1 1 0 0 0 1 -.9z" fill="#2661d8" fillOpacity=".75" />
  </svg>
);

const Jira = () => (
  <svg viewBox="0 0 32 32" className={icon}>
    <path d="M15.5 0 H32 V16.5 c-4 0 -7 -3 -7 -6.8 V7 h-2.8 C18.500 7 15.500 4 15.500 0z" fill="#3f84fb" />
    <path d="M8 7.700 H24.300 V24 c-4 0 -7 -3 -7 -6.800 V14.600 h-2.700 C11 14.600 8 11.600 8 7.700z" fill="#2f73ec" />
    <path d="M0 15.500 H16.500 V32 c-4 0 -7 -3 -7 -6.800 V22.300 H6.800 C3 22.300 0 19.300 0 15.500z" fill="#3f84fb" />
    <path d="M24.300 7.700 l-5 2.200 5 4z M16.500 15.500 l-5.500 2 5.500 4z" fill="#1d5bd0" fillOpacity=".6" />
  </svg>
);

const Jenkins = () => (
  <svg viewBox="0 0 32 32" className={icon}>
    <path d="M2 32 C2 28 5 27 9 26 L24 26 C28 26 30 28 30 32z" fill="#31546a" stroke="#1c2a33" strokeWidth=".8" />
    <path d="M4.500 13 C4 4 10 .600 17 .700 C24 1 27.500 5 27.500 12 C28 19 27 25 20 27.500 C14 29.500 9 25 7.500 20 C5 19 4.500 16 4.500 13z" fill="#eed5b3" stroke="#2a2320" strokeWidth="1.100" />
    <path d="M4.500 14 C4 6 8 2 13 1.500 C9.500 4 9 8 9 11 L8 14 L6 16z" fill="#777777" stroke="#2a2320" strokeWidth=".6" />
    <path d="M13 8 q2 -1.600 4 -.500 M21 7.500 q2 -.700 3.500 .600 M15.500 12 q1.500 -1 3 0 M22 12 q1.300 -.800 2.500 0 M21 13 q2 3 .500 4.500 M16 20 q4 3 8 -1 M18 19 q3 -2 6 -.200" fill="none" stroke="#3a2b24" strokeWidth="1.100" />
    <path d="M14 26 L20 28.500 L14 32z M27 25.500 L21 28.500 L27 32z" fill="#d23b32" stroke="#6b1512" strokeWidth=".6" />
    <circle cx="20.500" cy="28.800" r="2" fill="#e0463c" />
  </svg>
);

const Airflow = () => (
  <svg viewBox="0 0 32 32" className={icon}>
    <path d="M1 1 C12 1 22 3 20 11 L16 16 C13 9 6 10 1 1z" fill="#d8452f" />
    <path d="M20 8 L22 9 L16 16 C17 13 16 12 20 8z" fill="#f08b66" />
    <path d="M31 1 C31 12 29 21 22 20.500 L16 16 C23 13 22 6 31 1z" fill="#57c6d6" />
    <path d="M24 20 L21 21.500 L16 16z" fill="#8ee6ee" />
    <path d="M31 31 C20 31 10 29 11 22 L16 16 C19 23 26 22 31 31z" fill="#45a957" />
    <path d="M12 25 L10.500 22 L16 16z" fill="#6fd66d" />
    <path d="M1 31 C1 20 3 11 10 11.500 L16 16 C9 19 10 26 1 31z" fill="#2f74e8" />
    <path d="M7 11 L11 10 L16 16z" fill="#62b2f6" />
  </svg>
);

const Graylog = () => (
  <span className="flex h-8 w-8 shrink-0 items-center justify-center rounded-full bg-[#1f1d1d] pb-2 font-['Open_Sans',sans-serif] text-[25px] font-bold leading-8 text-white">
    g
  </span>
);

const Crown = () => (
  <svg viewBox="0 0 32 32" className={icon}>
    <circle cx="16" cy="16" r="16" fill="#262730" />
    <path d="M9 21.500 H23.500 L27 12 L19.500 16z" fill="#9b9ba3" />
    <path d="M5 10.500 L12 15.500 L16.200 9.500 L20 15.500 L24 21.500 H9z" fill="#ffffff" />
    <path d="M16.200 9.500 L22.500 21.500 L27.500 11 L20 15z" fill="#c4c4c9" />
  </svg>
);

const YouTube = () => (
  <svg viewBox="0 0 32 32" className={icon}>
    <rect x="0" y="5" width="32" height="22" rx="5.500" fill="#e9402c" />
    <path d="M13 11 L21 16 L13 21z" fill="#fff" />
  </svg>
);

const TABS: { title: string; Icon: React.FC; active?: boolean }[] = [
  { title: "Email -...", Icon: Outlook },
  { title: "AWS a...", Icon: AwsCube },
  { title: "Elastic...", Icon: LetterA },
  { title: "solutio...", Icon: Bitbucket },
  { title: "platfor...", Icon: Bitbucket },
  { title: "[IVMSP...", Icon: Jira },
  { title: "SOL Sp...", Icon: Jira },
  { title: "Servic...", Icon: LetterA },
  { title: "ss_pus...", Icon: Jenkins },
  { title: "solutio...", Icon: Airflow },
  { title: "Logs |...", Icon: Graylog },
  { title: "app", Icon: Crown, active: true },
  { title: "Golf Be...", Icon: YouTube },
];

/* ------------------------------------------------------------------ */
/* Browser chrome                                                      */
/* ------------------------------------------------------------------ */

function Toolbar() {
  return (
    <div className="flex h-[104px] items-start bg-[#f4f4f2] text-[#6a6a69]">
      <div className="flex w-[900px] items-center pl-[42px] pt-[33px]">
        <svg viewBox="0 0 38 32" className="h-8 w-[38px]" fill="none" stroke="currentColor">
          <rect x="1.300" y="2.300" width="35.400" height="27.400" rx="4.500" strokeWidth="2.600" />
          <path d="M14 2 V30" strokeWidth="2.400" />
          <path d="M5.500 8.500 h4.500 M5.500 12.800 h4.500 M5.500 17.100 h4.500" strokeWidth="1.900" strokeLinecap="round" />
        </svg>
        <div className="ml-[14px] h-9 w-[2px] bg-[#e6e6e4]" />
        <svg viewBox="0 0 16 10" className="ml-[12px] h-[10px] w-4" fill="none" stroke="#7c7c7b" strokeWidth="3" strokeLinecap="round" strokeLinejoin="round">
          <path d="M2 2 L8 8 L14 2" />
        </svg>
        <svg viewBox="0 0 18 30" className="ml-[50px] h-[30px] w-[18px]" fill="none" stroke="#b2b2b1" strokeWidth="2.800" strokeLinecap="round" strokeLinejoin="round">
          <path d="M16 2 L2 15 L16 28" />
        </svg>
        <svg viewBox="0 0 18 30" className="ml-[54px] h-[30px] w-[18px]" fill="none" stroke="#b2b2b1" strokeWidth="2.800" strokeLinecap="round" strokeLinejoin="round">
          <path d="M2 2 L16 15 L2 28" />
        </svg>
      </div>
      <div className="mt-6 flex h-14 w-[1224px] items-center rounded-[14px] border-2 border-[#d8d8d6] pr-[9px]">
        <span className="flex-1 pl-[36px] pt-px text-center text-[25px] leading-8 tracking-[-0.1px] text-[#3f3f3e]">localhost</span>
        <svg viewBox="0 0 26 30" className="h-[30px] w-[26px]" fill="none" stroke="#7a7a79" strokeWidth="2.200" strokeLinecap="round" strokeLinejoin="round">
          <path d="M15.500 7.300 A10.300 10.300 0 1 0 23.300 17.300" />
          <path d="M11.500 2 L17 7.500 L11.500 13" />
        </svg>
      </div>
      <div className="flex flex-1 items-start justify-end pr-[38px] pt-[31px]">
        <svg viewBox="0 0 32 40" className="h-10 w-8" fill="none" stroke="currentColor" strokeWidth="2.500" strokeLinecap="round" strokeLinejoin="round">
          <path d="M10 13 H5.500 a3.500 3.500 0 0 0 -3.500 3.500 V33.500 a3.500 3.500 0 0 0 3.500 3.500 H26.500 a3.500 3.500 0 0 0 3.500 -3.500 V16.500 a3.500 3.500 0 0 0 -3.500 -3.500 H22" />
          <path d="M16 25 V3 M9.500 9 L16 2.500 L22.500 9" />
        </svg>
        <svg viewBox="0 0 28 28" className="ml-[44px] mt-[6px] h-7 w-7" fill="none" stroke="currentColor" strokeWidth="2.700" strokeLinecap="round">
          <path d="M14 1.500 V26.500 M1.500 14 H26.500" />
        </svg>
        <svg viewBox="0 0 36 36" className="ml-[44px] mt-[2px] h-9 w-9" fill="none" stroke="currentColor" strokeWidth="2.600" strokeLinejoin="round">
          <path d="M8.500 26.500 H6 a4 4 0 0 1 -4 -4 V6 a4 4 0 0 1 4 -4 H22.500 a4 4 0 0 1 4 4 V8.500" />
          <rect x="9.500" y="9.500" width="25" height="24.500" rx="4" />
        </svg>
      </div>
    </div>
  );
}

function TabBar() {
  return (
    <div className="flex h-14 bg-[#e6e6e4]">
      {TABS.map(({ title, Icon, active }, i) => (
        <div
          key={i}
          className={
            active
              ? "flex w-[240px] items-center border-l-2 border-l-[#d2d2d0] bg-[#f4f4f2] pl-[70px] text-[#2d2d2c]"
              : "flex w-[232px] items-center border-l-2 border-t border-l-[#d2d2d0] border-t-[#c2c2c0] bg-gradient-to-b from-[#dcdcda] to-[#e6e6e4] to-15% pl-[48px] text-[#6b6b6a] first:border-l-0"
          }
        >
          <Icon />
          <span className="ml-[10px] whitespace-nowrap text-[22px] leading-7 tracking-[-0.3px]">{title}</span>
        </div>
      ))}
    </div>
  );
}

/* ------------------------------------------------------------------ */
/* Page                                                                */
/* ------------------------------------------------------------------ */

function LayerCheckbox({ label }: { label: string }) {
  return (
    <div className="flex h-8 items-center">
      <span className="flex h-8 w-8 items-center justify-center rounded-[8px] bg-[#ee5a54]">
        <svg viewBox="0 0 26 20" className="h-5 w-[26px]" fill="none" stroke="#fff" strokeWidth="4.600">
          <path d="M2 8.500 L10 16 L24 2.500" />
        </svg>
      </span>
      <span className="ml-5 whitespace-nowrap pb-[3px] text-[28.6px] leading-8">{label}</span>
    </div>
  );
}

export default function App() {
  return (
    <div className="flex h-[1964px] w-[3024px] flex-col overflow-hidden bg-white font-['Noto_Sans_CJK_SC',sans-serif] text-[#31333f]">
      <div className="h-[74px] shrink-0 bg-black" />
      <div className="shrink-0 font-[Inter,sans-serif]">
        <Toolbar />
        <TabBar />
      </div>
      <div className="h-1 shrink-0 border-t border-black/15 bg-gradient-to-r from-[#f05b54] via-[#f6a56f] to-[#fdfd80]" />

      <div className="flex flex-1">
        <aside className="w-[672px] bg-[#f0f2f6] pl-12">
          <div className="flex h-[144px] justify-end pr-[76px] pt-[59px]">
            <svg viewBox="0 0 18 26" className="h-[26px] w-[18px]" fill="none" stroke="#808495" strokeWidth="4">
              <path d="M15.500 2 L4 13 L15.500 24" />
            </svg>
          </div>
          <h2 className="mt-5 h-[50px] whitespace-nowrap text-[31px] font-bold leading-[48px]">Map Layers</h2>
          <div className="mt-9 flex flex-col gap-12">
            <LayerCheckbox label="Low Lying Areas" />
            <LayerCheckbox label="Village Boundaries" />
          </div>
        </aside>

        <main className="flex-1">
          <header className="flex h-[136px] items-center justify-end pr-[72px]">
            <span className="pb-[2px] text-[25px] leading-8">Deploy</span>
            <svg viewBox="0 0 8 28" className="ml-[52px] h-7 w-2" fill="#31333f">
              <circle cx="4" cy="4" r="3.400" />
              <circle cx="4" cy="14" r="3.400" />
              <circle cx="4" cy="24" r="3.400" />
            </svg>
          </header>

          <div className="ml-[472px] mt-[55px] w-[1408px]">
            <label className="block h-[53px] whitespace-nowrap text-[25.1px] leading-10">Which village in Bengaluru do you live in ?</label>
            <div className="flex h-20 items-center justify-between rounded-[16px] bg-[#f0f2f6] pl-[22px] pr-[31px]">
              <span className="pb-[2px] text-[28.6px] leading-10">Nallurahalli</span>
              <svg viewBox="0 0 22 14" className="h-[14px] w-[22px]" fill="none" stroke="#31333f" strokeWidth="4" strokeLinecap="round" strokeLinejoin="round">
                <path d="M2.500 2.500 L11 10.800 L19.500 2.500" />
              </svg>
            </div>

            <div className="relative mt-12 h-[1000px] w-[1408px] overflow-hidden">
              <VillageMap />
              <div className="absolute right-[26px] top-6 flex w-[58px] flex-col rounded-[8px] bg-white shadow-[0_0_0_4px_rgba(0,0,0,0.1)]">
                <div className="flex h-[60px] items-center justify-center border-b-2 border-[#ebedf2]">
                  <svg viewBox="0 0 24 24" className="h-6 w-6" stroke="#333" strokeWidth="5.600" strokeLinecap="round">
                    <path d="M12 3 V21 M3 12 H21" />
                  </svg>
                </div>
                <div className="flex h-[56px] items-center justify-center">
                  <svg viewBox="0 0 24 24" className="h-6 w-6" stroke="#333" strokeWidth="5.600" strokeLinecap="round">
                    <path d="M3 12 H21" />
                  </svg>
                </div>
              </div>

              <div className="absolute bottom-[13px] left-[13px] flex h-[44px] items-center">
                <svg viewBox="0 0 44 44" className="h-[44px] w-[44px]">
                  <circle cx="22" cy="22" r="19.500" fill="#fff" stroke="#acacac" strokeWidth="3" />
                  <path d="M12.500 31 C11.500 24 12.500 19 16 15.500 C20 11.500 26.500 11.500 30 15 C33.500 18.500 33.500 24.500 29.500 28.500 C26 32 20 32.500 12.500 31z" fill="#acacac" />
                  <path d="M24 15.500 L25.600 19.400 L29.500 21 L25.600 22.600 L24 26.500 L22.400 22.600 L18.500 21 L22.400 19.400z" fill="#fff" />
                </svg>
                <svg viewBox="0 0 130 44" className="h-[44px] w-[130px]">
                  <text x="3" y="31" textLength="124" lengthAdjust="spacingAndGlyphs" fontFamily="Lato, sans-serif" fontWeight="900" fontSize="33" fill="#fff" stroke="#acacac" strokeWidth="4.500" strokeLinejoin="round" paintOrder="stroke">
                    mapbox
                  </text>
                </svg>
              </div>

              <div className="absolute bottom-0 right-0 flex h-10 items-center justify-end whitespace-nowrap bg-white/50 pl-[10px] pr-[10px] font-['Liberation_Sans',sans-serif] text-[24px] leading-10 text-[#404040]">
                <span className="tracking-[0.2px]">© Mapbox</span>
                <span className="ml-[7px] tracking-[0.2px]">© OpenStreetMap</span>
                <span className="ml-[11px] font-bold">Improve this map</span>
              </div>
            </div>
          </div>
        </main>
      </div>
    </div>
  );
}
